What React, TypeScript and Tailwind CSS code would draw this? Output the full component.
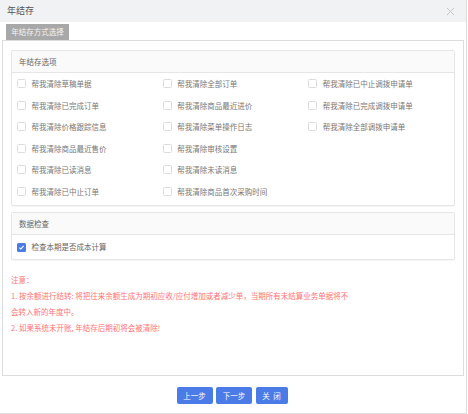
import React from "react";

const options = [
  "帮我清除草稿单据",
  "帮我清除全部订单",
  "帮我清除已中止调拨申请单",
  "帮我清除已完成订单",
  "帮我清除商品最近进价",
  "帮我清除已完成调拨申请单",
  "帮我清除价格跟踪信息",
  "帮我清除菜单操作日志",
  "帮我清除全部调拨申请单",
  "帮我清除商品最近售价",
  "帮我清除审核设置",
  "",
  "帮我清除已读消息",
  "帮我清除未读消息",
  "",
  "帮我清除已中止订单",
  "帮我清除商品首次采购时间",
  "",
];

const Box = ({ checked }: { checked?: boolean }) =>
  checked ? (
    <span className="w-[9px] h-[9px] rounded-[1.5px] bg-[#4a7be6] flex items-center justify-center shrink-0">
      <svg width="7" height="7" viewBox="0 0 10 10">
        <path d="M2 5.2l2 2 4-4.4" fill="none" stroke="#fff" strokeWidth="1.6" />
      </svg>
    </span>
  ) : (
    <span className="w-[9px] h-[9px] rounded-[1.5px] border border-[#dcdcdc] bg-white shrink-0" />
  );

export default function App() {
  return (
    <div
      className="w-[468px] h-[414px] bg-white"
      style={{ fontFamily: '"Noto Sans CJK SC", "Noto Sans", sans-serif' }}
    >
      <div className="w-[467px] h-[414px] border-r border-b border-[#dcdcdc] flex flex-col">
        {/* title bar */}
        <div className="h-[22px] bg-[#f1f2f4] flex items-center justify-between pl-[7px] pr-[11px]">
          <span className="text-[9px] text-[#555]">年结存</span>
          <svg width="9" height="9" viewBox="0 0 10 10">
            <path d="M1 1l8 8M9 1l-8 8" stroke="#c4c4c4" strokeWidth="1.1" />
          </svg>
        </div>

        {/* tab */}
        <div className="mt-[2px] ml-[6px] w-[63px] h-[16px] bg-[#a8a8a8] text-[#f4f4f4] text-[7.5px] flex items-center justify-center">
          年结存方式选择
        </div>

        {/* content */}
        <div className="ml-[2px] w-[462px] h-[336px] border border-[#dddddd] pt-[9px] px-[8px]">
          <div className="border border-[#e6e6e6] rounded-[2px] shadow-[0_1px_1px_rgba(0,0,0,0.04)]">
            <div className="h-[22px] bg-[#fafafa] border-b border-[#e6e6e6] flex items-center pl-[7px] text-[7.5px] text-[#666]">
              年结存选项
            </div>
            <div className="grid grid-cols-3 pl-[5px] pb-[3px]">
              {options.map((o, i) => (
                <div key={i} className="h-[21.5px] flex items-center gap-[5.5px]">
                  {o && (
                    <>
                      <Box />
                      <span className="text-[7.5px] text-[#777]">{o}</span>
                    </>
                  )}
                </div>
              ))}
            </div>
          </div>

          <div className="mt-[6px] border border-[#e6e6e6] rounded-[2px] shadow-[0_1px_1px_rgba(0,0,0,0.04)]">
            <div className="h-[22px] bg-[#fafafa] border-b border-[#e6e6e6] flex items-center pl-[7px] text-[7.5px] text-[#666]">
              数据检查
            </div>
            <div className="h-[24px] flex items-center gap-[5.5px] pl-[5px]">
              <Box checked />
              <span className="text-[7.5px] text-[#666]">检查本期是否成本计算</span>
            </div>
          </div>

          <div className="mt-[12px] text-[7.5px] leading-[16px] text-[#ff7474]">
            <div>注意：</div>
            <div>1. 按余额进行结转: 将把往来余额生成为期初应收/应付增加或者减少单，当期所有未结算业务单据将不</div>
            <div>会转入新的年度中。</div>
            <div>2. 如果系统未开账, 年结存后期初将会被清除!</div>
          </div>
        </div>

        {/* buttons */}
        <div className="mt-[11px] flex justify-center gap-[3.5px] pr-[2px]">
          <button className="w-[36px] h-[17px] rounded-[2px] bg-[#4a7be6] text-white text-[7.5px]">上一步</button>
          <button className="w-[36px] h-[17px] rounded-[2px] bg-[#4a7be6] text-white text-[7.5px]">下一步</button>
          <button className="w-[32px] h-[17px] rounded-[2px] bg-[#4a7be6] text-white text-[7.5px] whitespace-pre">关  闭</button>
        </div>
      </div>
    </div>
  );
}
